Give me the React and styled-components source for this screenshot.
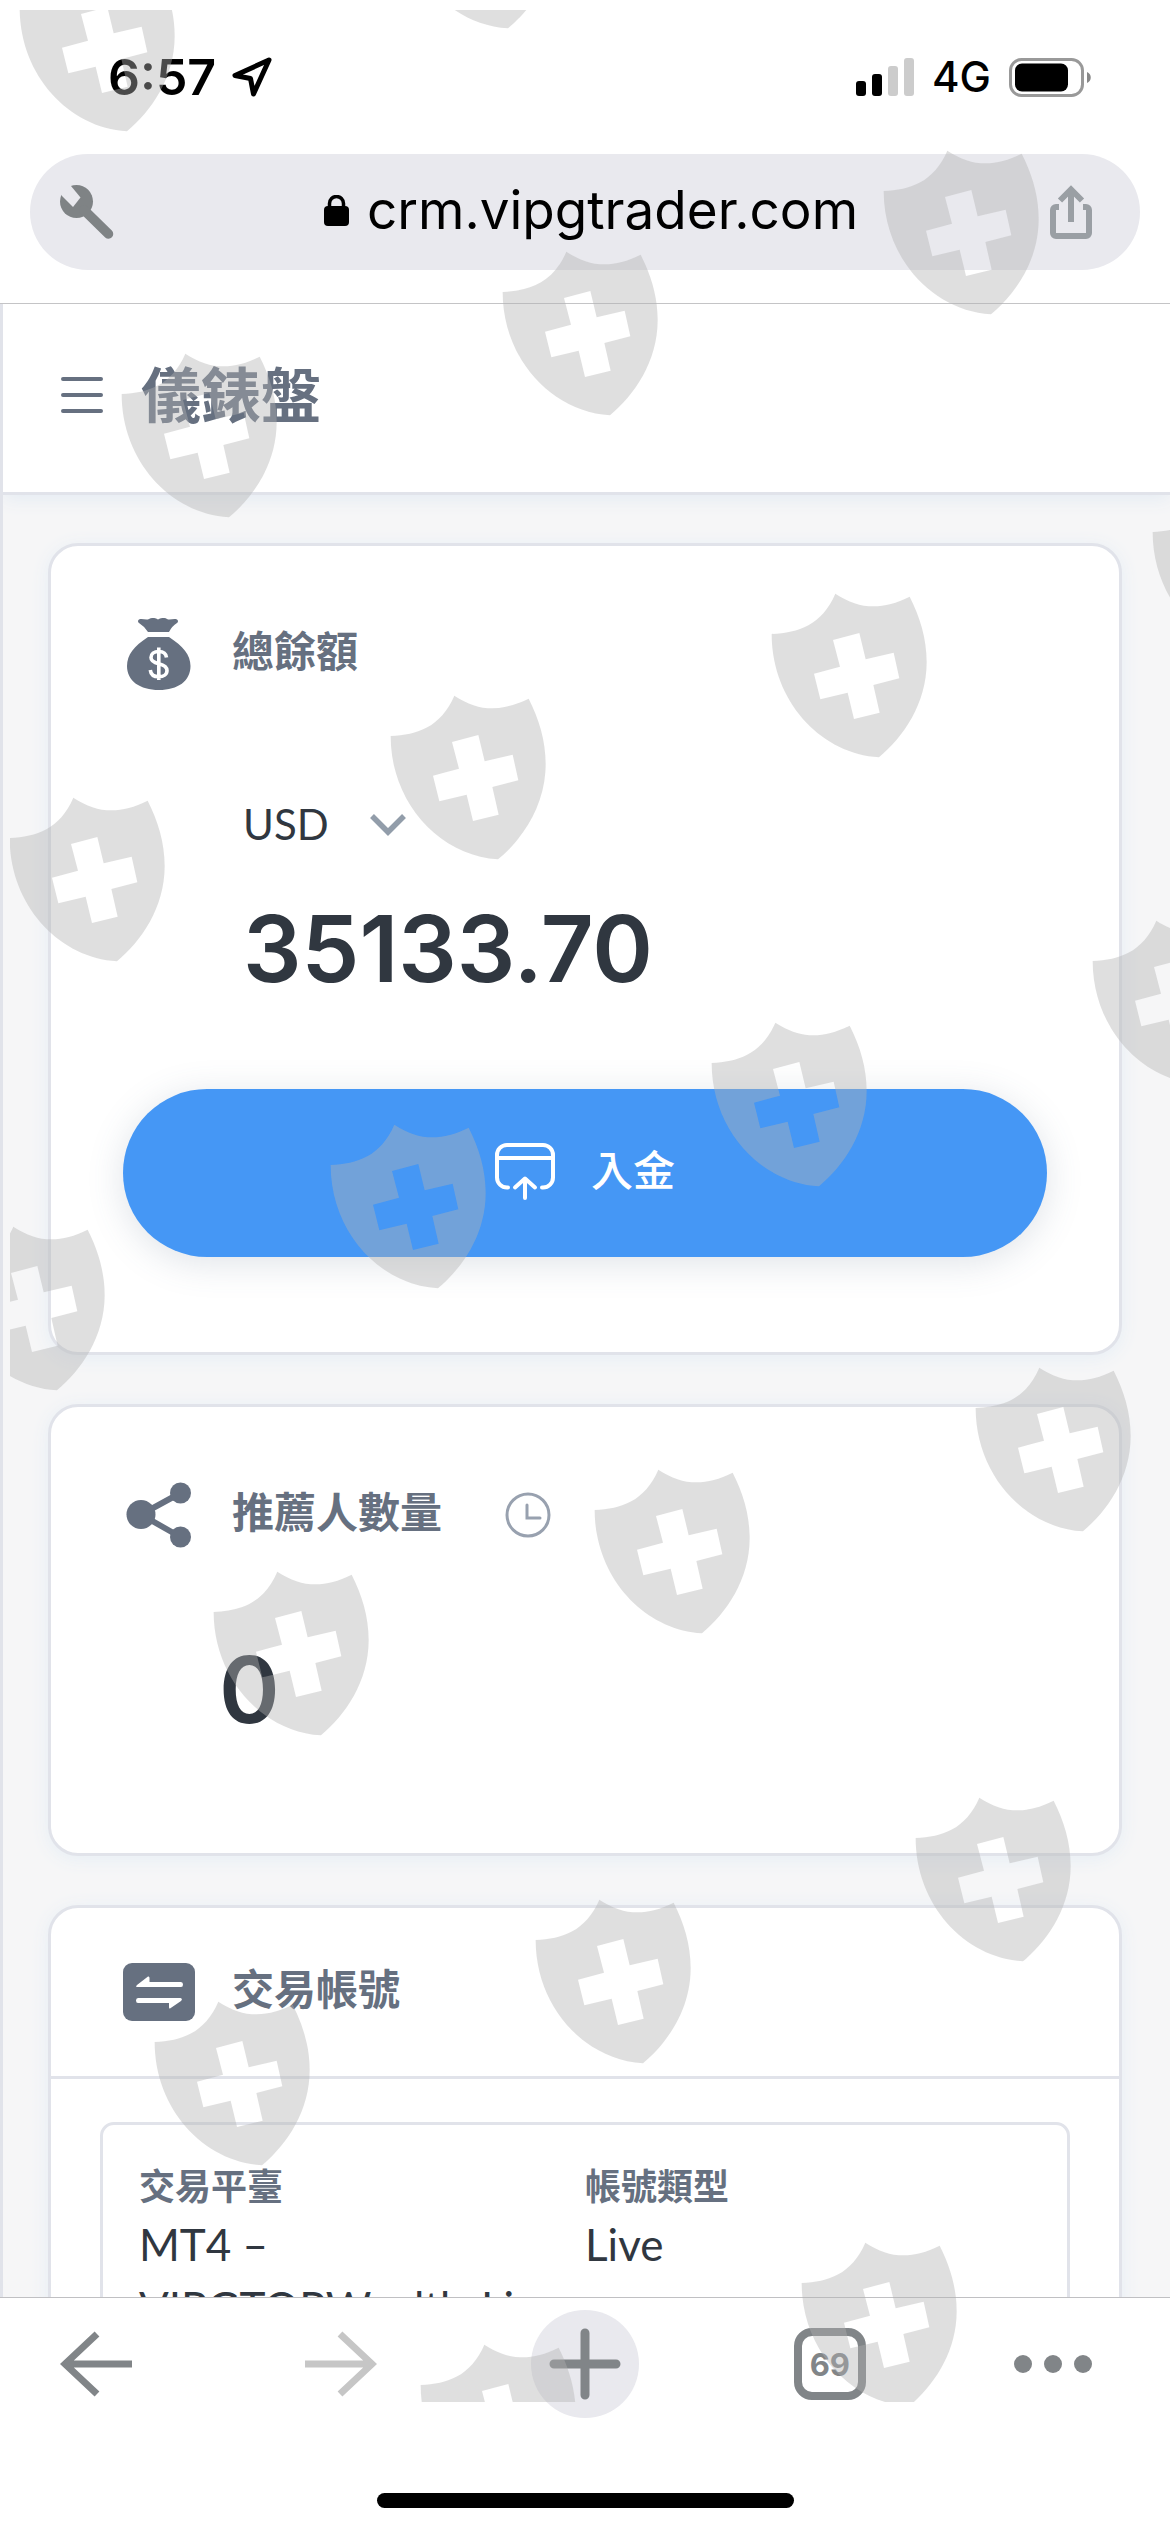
import React from "react";
import styled, { createGlobalStyle } from "styled-components";

const slate = "#667080";
const ink = "#303740";
const line = "#e1e3ea";
const chrome = "#818588";
const cjk = `"Noto Sans CJK TC", "Noto Sans CJK SC", sans-serif`;
const systemFont = `Inter, ${cjk}`;
const pageFont = `Lato, ${cjk}`;

const GlobalStyle = createGlobalStyle`
  *, *::before, *::after { box-sizing: border-box; }
  html, body { margin: 0; background: #fff; }
  button, select { font: inherit; color: inherit; border: 0; background: none; padding: 0; margin: 0; }
  svg { display: block; flex: none; }
  h1, h2, p, dl, dt, dd { margin: 0; font-weight: inherit; }
`;

const Screen = styled.div`
  position: relative;
  display: flex;
  flex-direction: column;
  height: 100vh;
  overflow: hidden;
  background: #fff;
  font-family: ${pageFont};
  color: ${ink};
`;

const StatusBar = styled.header`
  display: flex;
  justify-content: space-between;
  align-items: center;
  height: 154px;
  padding: 0 78px 0 108px;
  font-family: ${systemFont};
  color: #000;
`;

const StatusGroup = styled.div`
  display: flex;
  align-items: center;
  gap: ${(p) => p.$gap}px;
`;

const Clock = styled.time`
  font-size: 50px;
  font-weight: 600;
  line-height: 60px;
`;

const Network = styled.span`
  font-size: 42px;
  font-weight: 500;
  line-height: 60px;
`;

const AddressArea = styled.div`
  padding: 0 30px 33px;
  border-bottom: 1px solid #c4c4c6;
`;

const AddressBar = styled.div`
  display: flex;
  align-items: center;
  justify-content: space-between;
  height: 116px;
  padding: 0 48px 0 30px;
  border-radius: 58px;
  background: #e9e9ee;
`;

const IconButton = styled.button`
  display: flex;
  align-items: center;
  cursor: pointer;
`;

const Address = styled.a`
  display: flex;
  align-items: center;
  gap: 18px;
  padding: 0 0 4px 18px;
  font-family: ${systemFont};
  font-size: 53px;
  line-height: 60px;
  color: #000;
  text-decoration: none;
`;

const WebView = styled.div`
  flex: 1;
  min-height: 0;
  overflow-y: auto;
  scrollbar-width: none;
  border-left: 3px solid ${line};
  background: #f6f6f7;
`;

const PageHeader = styled.header`
  position: relative;
  display: flex;
  align-items: center;
  gap: 38px;
  height: 191px;
  padding: 0 58px 6px;
  border-bottom: 3px solid ${line};
  background: #fff;
  box-shadow: 0 3px 18px #e2eaf2;
`;

const PageTitle = styled.h1`
  font-size: 60px;
  font-weight: 700;
  line-height: 84px;
  color: ${slate};
`;

const Cards = styled.main`
  display: flex;
  flex-direction: column;
  gap: 49px;
  padding: 48px 48px 48px 45px;
`;

const Card = styled.section`
  border: 3px solid ${line};
  border-radius: 30px;
  background: #fff;
  box-shadow: 0 3px 18px #e6eef5;
`;

const CardBody = styled.div`
  padding: 72px 72px ${(p) => p.$bottom}px;
`;

const CardHeading = styled.div`
  display: flex;
  align-items: center;
  gap: 37px;
  height: 72px;
`;

const RuledHeading = styled(CardHeading)`
  height: 171px;
  padding: 0 72px;
  border-bottom: 3px solid ${line};
`;

const CardTitle = styled.h2`
  padding-bottom: 6px;
  font-size: 42px;
  font-weight: 700;
  line-height: 60px;
  color: ${slate};
`;

const Hint = styled(IconButton)`
  margin-left: 26px;
`;

const Balance = styled.div`
  padding: 103px 0 92px 120px;
`;

const CurrencyField = styled.label`
  display: inline-grid;
  align-items: center;
  width: 163px;
  margin-bottom: 45px;
  font-size: 42px;
  line-height: 63px;

  & > * { grid-area: 1 / 1; }
  & > svg { justify-self: end; pointer-events: none; }
`;

const CurrencySelect = styled.select`
  appearance: none;
  width: 100%;
  height: 63px;
  outline: none;
  cursor: pointer;
`;

const Figure = styled.p`
  font-family: ${systemFont};
  font-size: 92px;
  font-weight: 600;
  line-height: 96px;
`;

const Referrals = styled.div`
  padding: 91px 0 0 96px;
`;

const DepositButton = styled.button`
  display: flex;
  align-items: center;
  justify-content: center;
  gap: 36px;
  width: 100%;
  height: 168px;
  padding-bottom: 6px;
  border-radius: 84px;
  background: #4597f5;
  box-shadow: 0 6px 36px rgba(80, 100, 130, 0.18);
  color: #fff;
  font-size: 42px;
  font-weight: 500;
  line-height: 60px;
  cursor: pointer;

  & > svg { margin-top: 4px; }
`;

const AccountList = styled.div`
  padding: 43px 49px 49px;
`;

const Account = styled.dl`
  display: grid;
  grid-template-columns: 1fr 1fr;
  gap: 24px 0;
  padding: 34px 36px;
  border: 3px solid ${line};
  border-radius: 14px;
`;

const Term = styled.dt`
  font-size: 36px;
  font-weight: 700;
  line-height: 54px;
  color: ${slate};
`;

const Detail = styled.dd`
  font-size: 44px;
  line-height: 63px;
`;

const BottomBar = styled.footer`
  display: flex;
  flex-direction: column;
  align-items: center;
  justify-content: space-between;
  height: 235px;
  padding: 12px 0 24px;
  border-top: 1px solid #c0c0c3;
  background: #fff;
`;

const NavRow = styled.nav`
  display: grid;
  grid-template-columns: 219px 1fr 1fr 1fr 218px;
  align-items: center;
  justify-items: center;
  width: 100%;

  & > :first-child { justify-self: start; margin-left: 60px; }
  & > :last-child { justify-self: end; margin-right: 78px; }
`;

const NewTab = styled(IconButton)`
  justify-content: center;
  width: 108px;
  height: 108px;
  border-radius: 50%;
  background: #e9e9ee;
`;

const TabCount = styled(IconButton)`
  justify-content: center;
  width: 72px;
  height: 72px;
  border: 8px solid ${chrome};
  border-radius: 18px;
  font-family: ${systemFont};
  font-size: 31px;
  font-weight: 700;
  color: ${chrome};
`;

const HomeIndicator = styled.div`
  width: 417px;
  height: 15px;
  border-radius: 8px;
  background: #000;
`;

const Overlay = styled.div`
  position: absolute;
  inset: 10px 0 130px 10px;
  overflow: hidden;
  pointer-events: none;
`;

const ShieldMark = styled.svg`
  position: absolute;
  left: ${(p) => p.$x - 12}px;
  top: ${(p) => p.$y - 52}px;
  width: 158px;
  height: 167px;
`;

const shields = [
  [20, 8], [401, -95],
  [122, 394], [503, 292], [884, 191],
  [10, 838], [391, 736], [772, 634], [1153, 532],
  [-50, 1267], [331, 1165], [712, 1063], [1093, 961],
  [214, 1612], [595, 1510], [976, 1408],
  [155, 2042], [536, 1940], [916, 1838],
  [421, 2385], [802, 2283],
];

function Watermark() {
  return (
    <Overlay aria-hidden="true">
      {shields.map(([x, y]) => (
        <ShieldMark key={`${x},${y}`} $x={x} $y={y} viewBox="30 65 474 501">
          <path
            fill="#b2b2b2"
            fillOpacity="0.416"
            fillRule="evenodd"
            d="M35 191C115 187 185 165 226 70C300 118 365 120 449 79C480 140 500 205 500 275C500 400 430 500 357 561C180 550 35 390 35 191ZM219 209L298 188L317 267L401 247L418 324L340 344L359 427L282 446L263 367L181 387L162 310L240 289Z"
          />
        </ShieldMark>
      ))}
    </Overlay>
  );
}

const LocationIcon = () => (
  <svg width="40" height="40" viewBox="0 0 40 40" fill="none" stroke="#000" strokeWidth="5" strokeLinejoin="round">
    <path d="M37 3L3 18.5L18.5 21.5L21.500 37Z" />
  </svg>
);

const SignalIcon = () => (
  <svg width="58" height="38" viewBox="0 0 58 38">
    <rect x="0" y="23" width="10" height="15" rx="3" />
    <rect x="16" y="16" width="10" height="22" rx="3" />
    <rect x="32" y="8" width="10" height="30" rx="3" fill="#ccc" />
    <rect x="48" y="0" width="10" height="38" rx="3" fill="#ccc" />
  </svg>
);

const BatteryIcon = () => (
  <svg width="83" height="39" viewBox="0 0 83 39">
    <rect x="1.500" y="1.500" width="72" height="36" rx="11" fill="none" stroke="#999" strokeWidth="3" />
    <rect x="6" y="5.500" width="53" height="28" rx="7" />
    <path d="M78 14C83 16 83 23 78 25Z" fill="#888" />
  </svg>
);

const WrenchIcon = () => (
  <svg width="54" height="54" viewBox="0 0 54 54">
    <circle cx="16.500" cy="16.500" r="16.500" fill="#7f8385" />
    <path d="M24 25L48.500 49" stroke="#7f8385" strokeWidth="9.500" strokeLinecap="round" />
    <path d="M-6 0L2 11L13 22L20.500 12.500L11 1L4 -6Z" fill="#e9e9ee" />
  </svg>
);

const LockIcon = () => (
  <svg width="25" height="31" viewBox="0 0 25 31">
    <rect x="0" y="11" width="25" height="20" rx="4" />
    <path d="M5.500 13V8.500a7 7 0 0 1 14 0V13" fill="none" stroke="#000" strokeWidth="3.500" />
  </svg>
);

const ShareUpIcon = () => (
  <svg width="42" height="54" viewBox="0 0 42 54" fill="none" stroke="#9a9fa4" strokeWidth="6">
    <path d="M9 22H6a3 3 0 0 0-3 3V48a3 3 0 0 0 3 3H36a3 3 0 0 0 3-3V25a3 3 0 0 0-3-3H33" />
    <path d="M21 37V5M10 15.500L21 4.500L32 15.500" />
  </svg>
);

const MenuIcon = () => (
  <svg width="42" height="36" viewBox="0 0 42 36" stroke={slate} strokeWidth="4" strokeLinecap="round">
    <path d="M2 2H40M2 18H40M2 34H40" />
  </svg>
);

const MoneyBagIcon = () => (
  <svg width="72" height="72" viewBox="0 0 72 72">
    <path
      fill={slate}
      d="M16 1.500C19 0 23 2.500 26 1C29-.5 32-.5 35 1.500C38-.5 42-.5 44 1C47 2.500 51 0 54 1.500Q56 3 54 5Q49 8 46 14H25Q21 8 16 5Q14 3 16 1.500ZM25 19H46C60 28 67.500 37 67.500 48C67.500 63 55 72 36 72C17 72 4 63 4 48C4 37 11 28 25 19Z"
    />
    <path
      fill="none"
      stroke="#fff"
      strokeWidth="3.600"
      d="M43.500 39.500C43 35.500 40 33.500 35.800 33.500C31 33.500 28 36 28 39.500C28 43 30.500 44.500 35.800 45.700C41 47 44 48.800 44 52.500C44 56.500 40.500 58.800 35.800 58.800C31 58.800 27.800 56.500 27.300 52M35.800 29.500V62"
    />
  </svg>
);

const ShareNodesIcon = () => (
  <svg width="72" height="72" viewBox="0 0 72 72" fill={slate}>
    <path d="M57.500 14L18 35.500L57.500 58" fill="none" stroke={slate} strokeWidth="6" />
    <circle cx="18" cy="35.500" r="14.500" />
    <circle cx="57.500" cy="14" r="10.500" />
    <circle cx="57.500" cy="58" r="10.500" />
  </svg>
);

const ClockIcon = () => (
  <svg width="46" height="46" viewBox="0 0 46 46" fill="none" stroke="#98a1af" strokeWidth="3">
    <circle cx="23" cy="23" r="21" />
    <path d="M22 13V26H35" strokeLinecap="round" />
  </svg>
);

const TransferIcon = () => (
  <svg width="72" height="58" viewBox="0 0 72 58">
    <rect width="72" height="58" rx="9" fill={slate} />
    <path
      fill="#fff"
      d="M14 22L25 13.500Q26.500 13 26.500 15V19H58Q60 19 60 21.500T58 24H14.500Q12 24 14 22ZM58 38L47 45.500Q46 46 46 44V40H15Q13 40 13 37.500T15 35H57.500Q60 36 58 38Z"
    />
  </svg>
);

const DepositIcon = () => (
  <svg width="60" height="58" viewBox="0 0 60 58" fill="none" stroke="#fff" strokeWidth="4" strokeLinecap="round" strokeLinejoin="round">
    <path d="M13 44.500H12A10 10 0 0 1 2 34.500V12A10 10 0 0 1 12 2H48A10 10 0 0 1 58 12V34.500A10 10 0 0 1 48 44.500H47M2 15H58" />
    <path d="M30 55V36M20 44.500L30 35.500L40 44.500" />
  </svg>
);

const ChevronIcon = () => (
  <svg width="36" height="24" viewBox="0 0 36 24" fill="none" stroke="#929daa" strokeWidth="5.500">
    <path d="M2 3L18 19L34 3" />
  </svg>
);

const ArrowIcon = ({ color, flip }) => (
  <svg width="72" height="66" viewBox="0 0 72 66" fill="none" stroke={color} strokeWidth="7">
    <path d={flip ? "M0 33H67M35 3L67 33L35 63" : "M72 33H5M37 3L5 33L37 63"} />
  </svg>
);

const PlusIcon = () => (
  <svg width="72" height="72" viewBox="0 0 72 72" stroke={chrome} strokeWidth="9" strokeLinecap="round">
    <path d="M36 5V67M5 36H67" />
  </svg>
);

const DotsIcon = () => (
  <svg width="78" height="18" viewBox="0 0 78 18" fill={chrome}>
    <circle cx="9" cy="9" r="9" />
    <circle cx="39" cy="9" r="9" />
    <circle cx="69" cy="9" r="9" />
  </svg>
);

export default function App() {
  return (
    <>
      <GlobalStyle />
      <Screen>
        <StatusBar>
          <StatusGroup $gap={16}>
            <Clock>6:57</Clock>
            <LocationIcon />
          </StatusGroup>
          <StatusGroup $gap={18}>
            <SignalIcon />
            <Network>4G</Network>
            <BatteryIcon />
          </StatusGroup>
        </StatusBar>

        <AddressArea>
          <AddressBar>
            <IconButton aria-label="Page tools"><WrenchIcon /></IconButton>
            <Address href="#address"><LockIcon />crm.vipgtrader.com</Address>
            <IconButton aria-label="Share"><ShareUpIcon /></IconButton>
          </AddressBar>
        </AddressArea>

        <WebView>
          <PageHeader>
            <IconButton aria-label="Menu"><MenuIcon /></IconButton>
            <PageTitle>儀錶盤</PageTitle>
          </PageHeader>

          <Cards>
            <Card>
              <CardBody $bottom={95}>
                <CardHeading>
                  <MoneyBagIcon />
                  <CardTitle>總餘額</CardTitle>
                </CardHeading>
                <Balance>
                  <CurrencyField>
                    <CurrencySelect aria-label="Currency" defaultValue="USD">
                      <option value="USD">USD</option>
                    </CurrencySelect>
                    <ChevronIcon />
                  </CurrencyField>
                  <Figure>35133.70</Figure>
                </Balance>
                <DepositButton><DepositIcon />入金</DepositButton>
              </CardBody>
            </Card>

            <Card>
              <CardBody $bottom={115}>
                <CardHeading>
                  <ShareNodesIcon />
                  <CardTitle>推薦人數量</CardTitle>
                  <Hint aria-label="History"><ClockIcon /></Hint>
                </CardHeading>
                <Referrals>
                  <Figure>0</Figure>
                </Referrals>
              </CardBody>
            </Card>

            <Card>
              <RuledHeading>
                <TransferIcon />
                <CardTitle>交易帳號</CardTitle>
              </RuledHeading>
              <AccountList>
                <Account>
                  <div>
                    <Term>交易平臺</Term>
                    <Detail>MT4 –<br />VIPGTOPWealth-Live</Detail>
                  </div>
                  <div>
                    <Term>帳號類型</Term>
                    <Detail>Live</Detail>
                  </div>
                </Account>
              </AccountList>
            </Card>
          </Cards>
        </WebView>

        <BottomBar>
          <NavRow>
            <IconButton aria-label="Back"><ArrowIcon color={chrome} /></IconButton>
            <IconButton aria-label="Forward"><ArrowIcon color="#c6c6c6" flip /></IconButton>
            <NewTab aria-label="New tab"><PlusIcon /></NewTab>
            <TabCount>69</TabCount>
            <IconButton aria-label="More"><DotsIcon /></IconButton>
          </NavRow>
          <HomeIndicator />
        </BottomBar>

        <Watermark />
      </Screen>
    </>
  );
}
